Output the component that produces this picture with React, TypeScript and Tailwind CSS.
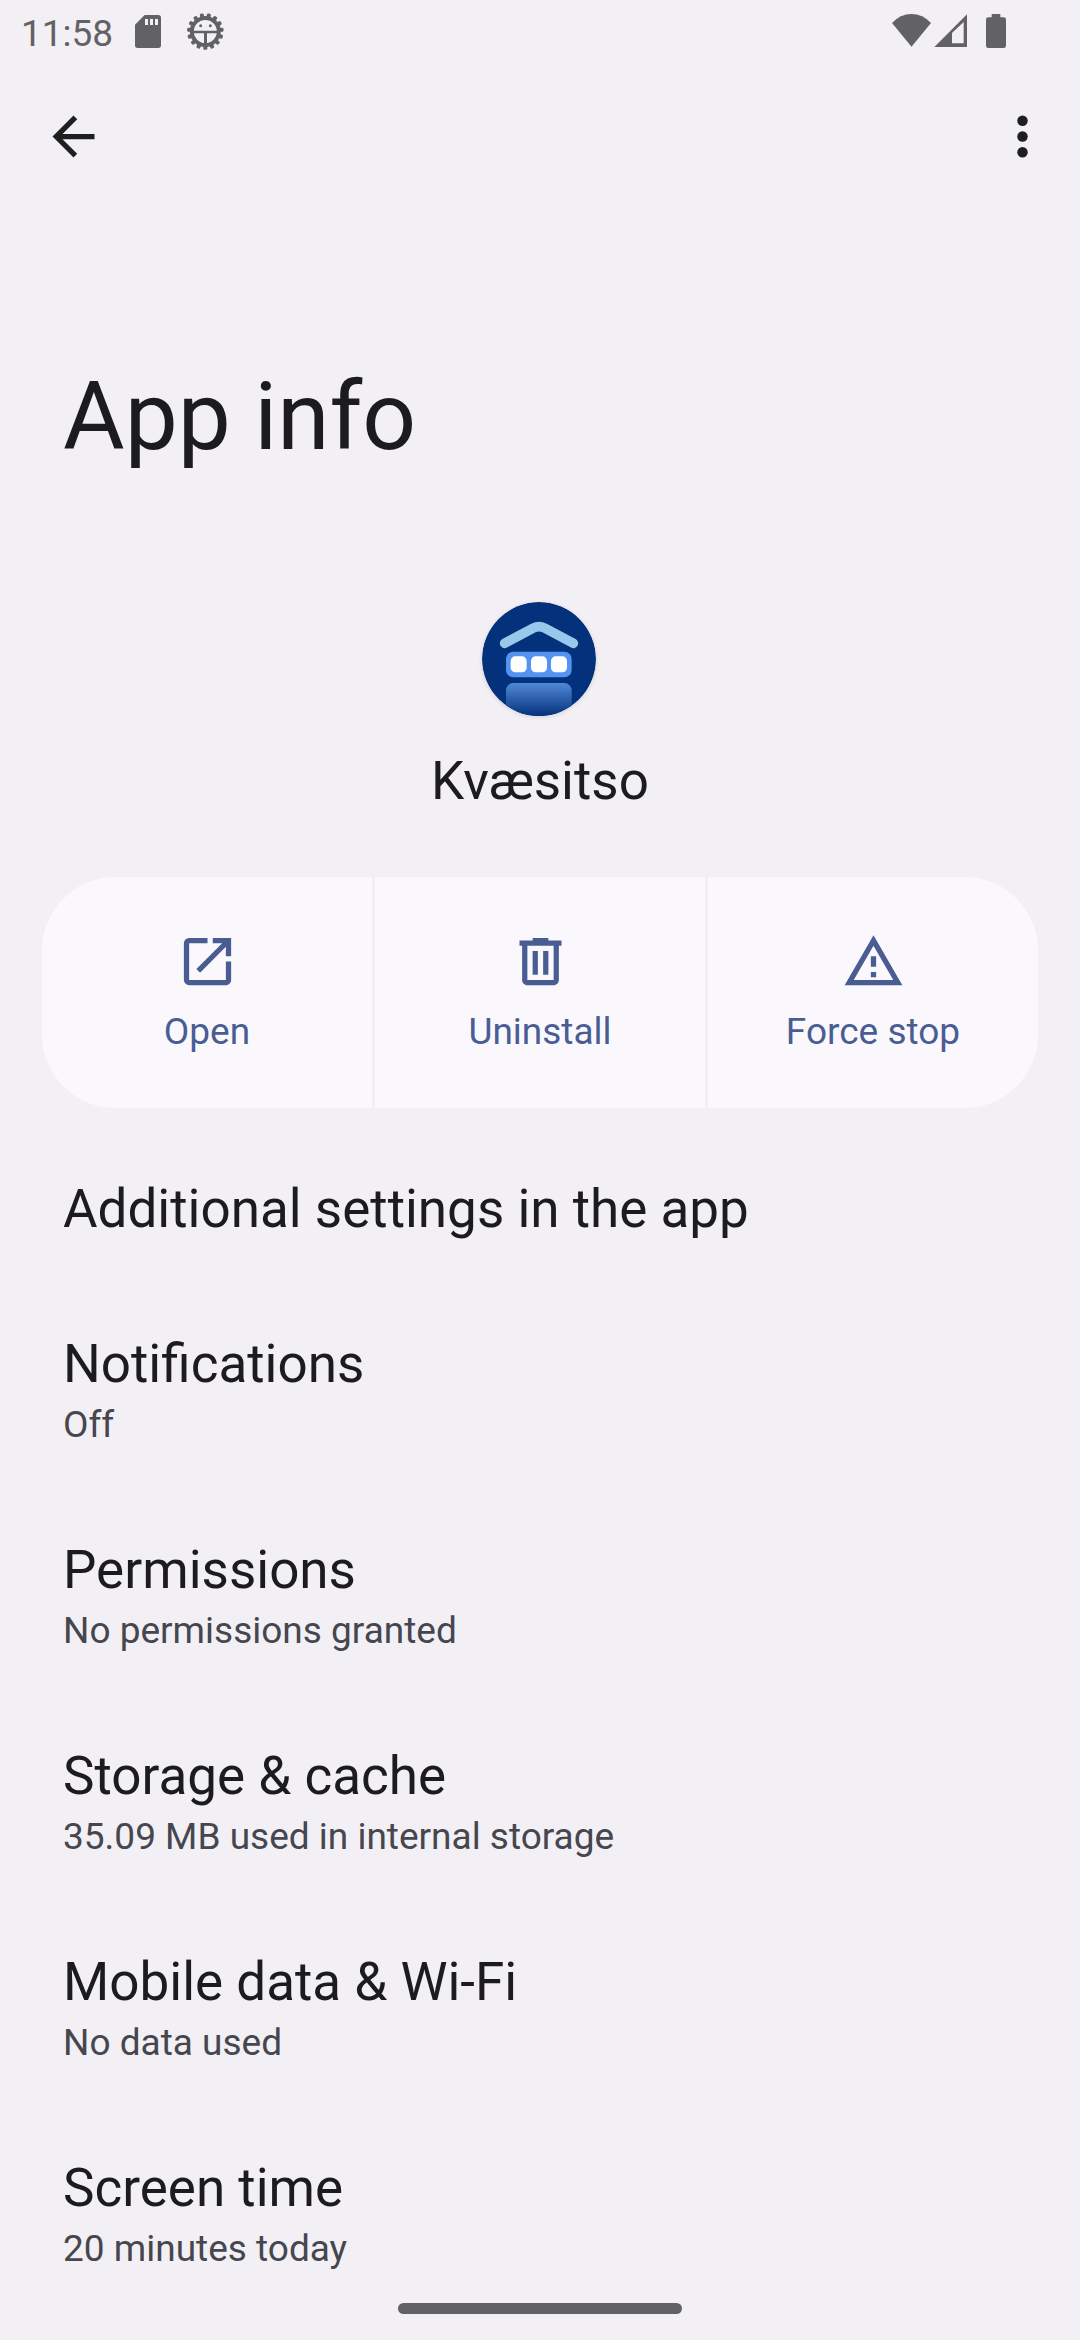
const rows: { title: string; summary?: string }[] = [
  { title: 'Additional settings in the app' },
  { title: 'Notifications', summary: 'Off' },
  { title: 'Permissions', summary: 'No permissions granted' },
  { title: 'Storage & cache', summary: '35.09 MB used in internal storage' },
  { title: 'Mobile data & Wi-Fi', summary: 'No data used' },
  { title: 'Screen time', summary: '20 minutes today' },
];

const actions = [
  {
    label: 'Open',
    path: 'M19 19H5V5h7V3H5a2 2 0 0 0-2 2v14a2 2 0 0 0 2 2h14c1.1 0 2-.9 2-2v-7h-2v7zM14 3v2h3.59l-9.83 9.83 1.41 1.41L19 6.41V10h2V3h-7z',
  },
  {
    label: 'Uninstall',
    path: 'M15 4V3H9v1H4v2h1v13c0 1.1.9 2 2 2h10c1.1 0 2-.9 2-2V6h1V4h-5zm2 15H7V6h10v13zM9 8h2v9H9V8zm4 0h2v9h-2V8z',
  },
  {
    label: 'Force stop',
    path: 'M12 5.99 19.53 19H4.47L12 5.99M12 2 1 21h22L12 2zm1 14h-2v2h2v-2zm0-6h-2v4h2v-4z',
  },
];

function BugGear() {
  return (
    <svg className="ml-[26px] mt-[13px] h-[37px] w-[37px]" viewBox="0 0 111 111" fill="#626264">
      {Array.from({ length: 15 }, (_, i) => (
        <rect key={i} x="49" y="0.5" width="12" height="18" rx="4" transform={`rotate(${i * 24 + 12} 55 55.5)`} />
      ))}
      <circle cx="55" cy="55.5" r="40.5" fill="none" stroke="#626264" strokeWidth="12" />
      <path d="M18 53h75v8H60v35h-9V61H18z" />
      <circle cx="41" cy="38" r="4.5" />
      <circle cx="70" cy="38" r="4.5" />
    </svg>
  );
}

function StatusBar() {
  return (
    <div className="flex h-[63px] items-start justify-between pr-[74px] pl-[21px] text-[#626264]">
      <div className="flex items-start">
        <span className="mt-[12px] w-[92px] text-[37px] leading-[43px] whitespace-nowrap">11:58</span>
        <svg className="mt-[15px] ml-[22px] h-[33px] w-[26px]" viewBox="0 0 78 99" fill="currentColor">
          <path fillRule="evenodd" d="M29 0H70a8 8 0 0 1 8 8V91a8 8 0 0 1-8 8H8a8 8 0 0 1-8-8V29zM30 12V30H39V12zM45 12V30H54V12zM60 12V30H69V12z" />
        </svg>
        <BugGear />
      </div>
      <div className="flex items-start">
        <svg className="mt-[14px] h-[33px] w-[39px]" viewBox="0 0 117 99" fill="currentColor">
          <path d="M0 27Q25 0 58.500 0T117 27L58.500 98z" />
        </svg>
        <svg className="mt-[14px] ml-[3px] h-[33px] w-[33px]" viewBox="0 0 99 99" fill="currentColor">
          <path fillRule="evenodd" d="M1 99 99 1V99zM54 57V88H89V24z" />
        </svg>
        <svg className="mt-[14px] ml-[19px] h-[34px] w-[20px]" viewBox="0 0 60 102" fill="currentColor">
          <path d="M17 0H43V10H53a7 7 0 0 1 7 7V95a7 7 0 0 1-7 7H7a7 7 0 0 1-7-7V17a7 7 0 0 1 7-7H17z" />
        </svg>
      </div>
    </div>
  );
}

function AppIcon() {
  return (
    <svg className="h-[150px] w-[160px]" viewBox="0 0 480 450">
      <defs>
        <linearGradient id="base" x1="0" y1="309" x2="0" y2="408" gradientUnits="userSpaceOnUse">
          <stop offset="0" stopColor="#5189d6" />
          <stop offset="1" stopColor="#04317c" />
        </linearGradient>
        <clipPath id="disc">
          <circle cx="237" cy="237" r="171" />
        </clipPath>
        <filter id="shade" x="-10%" y="-10%" width="120%" height="120%">
          <feGaussianBlur stdDeviation="6" />
        </filter>
      </defs>
      <circle cx="237" cy="240" r="171" fill="#000" opacity="0.12" filter="url(#shade)" />
      <g clipPath="url(#disc)">
        <circle cx="237" cy="237" r="171" fill="#04317c" />
        <path d="M134 190 220 144Q237 136 254 144L340 190" fill="none" stroke="#98c8ea" strokeWidth="29" strokeLinecap="round" />
        <rect x="138" y="215" width="197" height="77" rx="22" fill="#5294ef" />
        <rect x="152" y="229" width="48" height="48" rx="14" fill="#fff" />
        <rect x="213" y="229" width="48" height="48" rx="14" fill="#fff" />
        <rect x="273" y="229" width="48" height="48" rx="14" fill="#fff" />
        <rect x="138" y="309" width="197" height="130" rx="22" fill="url(#base)" />
      </g>
    </svg>
  );
}

export default function App() {
  return (
    <div className="flex h-[2340px] w-[1080px] flex-col overflow-hidden bg-[#f2f0f5] font-['Roboto',sans-serif] text-[#1b1b20]">
      <StatusBar />
      <header className="flex h-[147px] shrink-0 items-center justify-between pr-[26px] pl-[42px] text-[#1f1f1f]">
        <svg className="h-[63px] w-[63px]" viewBox="0 0 24 24" fill="currentColor">
          <path d="M20 11H7.830l5.590-5.590L12 4l-8 8 8 8 1.410-1.410L7.830 13H20v-2z" />
        </svg>
        <svg className="h-[63px] w-[63px]" viewBox="0 0 24 24" fill="currentColor">
          <circle cx="12" cy="6" r="2" />
          <circle cx="12" cy="12" r="2" />
          <circle cx="12" cy="18" r="2" />
        </svg>
      </header>
      <h1 className="mt-[151px] ml-[63px] text-[94.5px] leading-[111px]">App info</h1>
      <section className="mt-[108px] flex shrink-0 flex-col items-center">
        <AppIcon />
        <h2 className="mt-[20px] text-[53px] leading-[62px]">Kvæsitso</h2>
      </section>
      <section className="mx-[42px] mt-[65px] grid h-[231px] shrink-0 grid-cols-3 gap-[3px] overflow-hidden rounded-[73.5px]">
        {actions.map((a) => (
          <button key={a.label} className="flex flex-col items-center bg-[#faf8fd] pt-[53px] text-[#4a5d93]">
            <svg className="h-[63px] w-[63px]" viewBox="0 0 24 24" fill="currentColor">
              <path d={a.path} />
            </svg>
            <span className="mt-[17px] text-[37px] leading-[43px]">{a.label}</span>
          </button>
        ))}
      </section>
      <main className="mt-[24px] flex shrink-0 flex-col">
        {rows.map((r) => (
          <div key={r.title} className="px-[63px] pt-[46px] pb-[47px]">
            <div className="text-[53px] leading-[62px]">{r.title}</div>
            {r.summary && <div className="mt-[8px] text-[37px] leading-[43px] text-[#46464f]">{r.summary}</div>}
          </div>
        ))}
      </main>
      <div className="mt-[-14px] ml-[398px] h-[10.5px] w-[284px] shrink-0 rounded-full bg-[#626264]" />
    </div>
  );
}
